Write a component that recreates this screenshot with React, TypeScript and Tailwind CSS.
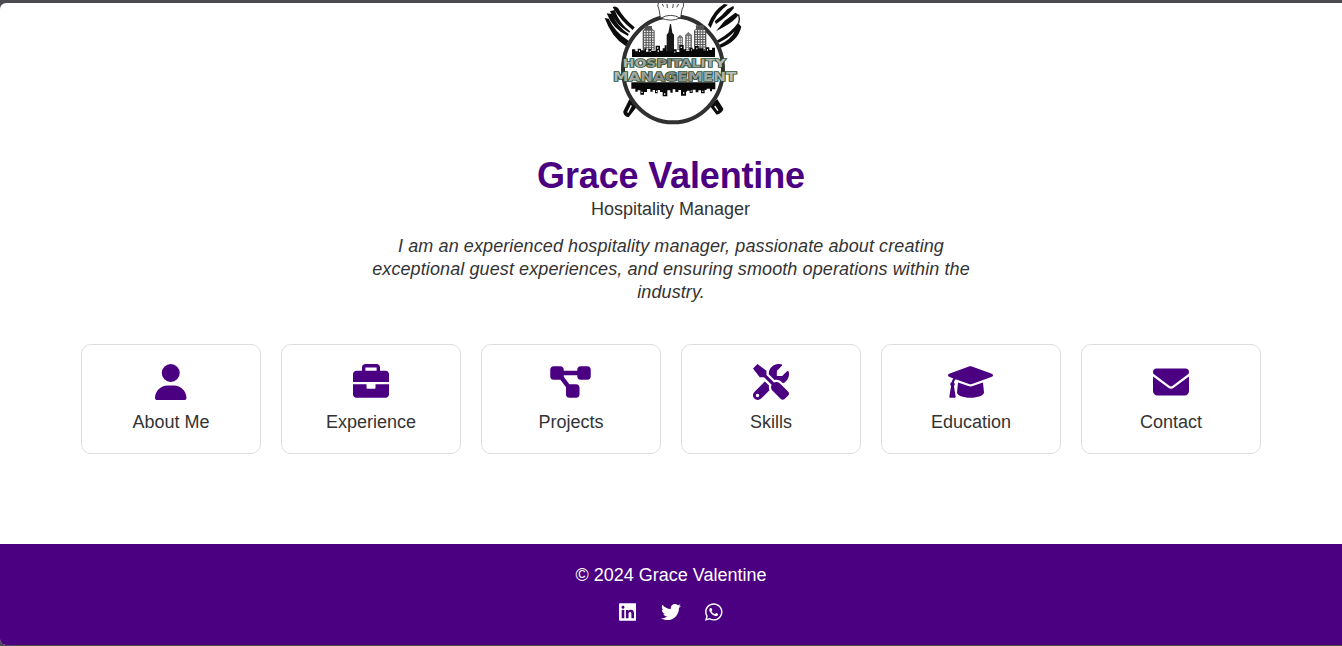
import React from "react";
import type { ComponentType } from "react";
import { FaUser, FaDiagramProject, FaEnvelope, FaLinkedin, FaTwitter, FaWhatsapp } from "react-icons/fa6";

type IconProps = { className?: string };

function BriefcaseIcon({ className }: IconProps) {
  return (
    <svg className={className} viewBox="0 0 512 512" fill="currentColor">
      <path d="M320 336c0 8.844-7.156 16-16 16h-96C199.2 352 192 344.8 192 336V288H0v144C0 457.6 22.41 480 48 480h416c25.59 0 48-22.41 48-48V288h-192V336zM464 96H384V48C384 22.41 361.6 0 336 0h-160C150.4 0 128 22.41 128 48V96H48C22.41 96 0 118.4 0 144V256h512V144C512 118.4 489.6 96 464 96zM336 96h-160V48h160V96z" />
    </svg>
  );
}

function ToolsIcon({ className }: IconProps) {
  return (
    <svg className={className} viewBox="0 0 512 512" fill="currentColor">
      <path d="M331.8 224.1c28.29 0 54.88 10.99 74.86 30.97l19.59 19.59c40.01-17.74 71.25-53.3 81.62-96.65c5.725-23.92 5.34-47.08 .2148-68.4c-2.613-10.88-16.43-14.51-24.34-6.604l-68.9 68.9h-75.6V97.2l68.9-68.9c7.912-7.912 4.275-21.73-6.604-24.34c-21.32-5.125-44.48-5.51-68.4 .2148c-55.3 13.23-98.39 60.22-107.2 116.4C224.5 128.9 224.2 137 224.3 145l82.78 82.86C315.2 225.1 323.5 224.1 331.8 224.1zM384 278.6c-23.16-23.16-57.57-27.57-85.39-13.9L191.1 158L191.1 95.99l-127.1-95.99L0 63.1l96 127.1l62.04 .0077l106.7 106.6c-13.67 27.82-9.251 62.23 13.91 85.39l117 117.1c14.62 14.5 38.21 14.5 52.71-.0016l52.75-52.75c14.5-14.5 14.5-38.08-.0016-52.71L384 278.6zM227.9 307L168.7 247.9l-148.9 148.9c-26.37 26.37-26.37 69.08 0 95.45C32.96 505.4 50.21 512 67.5 512s34.54-6.592 47.72-19.78l119.1-119.1C225.5 352.3 222.6 329.4 227.9 307zM64 472c-13.25 0-24-10.75-24-24c0-13.26 10.75-24 24-24S88 434.7 88 448C88 461.3 77.25 472 64 472z" />
    </svg>
  );
}

function GraduationIcon({ className }: IconProps) {
  return (
    <svg className={className} viewBox="0 0 640 512" fill="currentColor">
      <path d="M623.1 136.9l-282.7-101.2c-13.73-4.91-28.7-4.91-42.43 0L16.05 136.9C6.438 140.4 0 149.6 0 160s6.438 19.65 16.05 23.09L76.07 204.6c-11.89 15.8-20.26 34.16-24.55 53.95C40.05 263.4 32 274.8 32 288c0 9.953 4.814 18.49 11.94 24.36l-24.83 149C17.48 471.1 25 480 34.89 480H93.11c9.887 0 17.41-8.879 15.78-18.63l-24.83-149C91.19 306.5 96 297.1 96 288c0-10.29-5.174-19.03-12.72-24.89c4.252-17.76 12.88-33.82 24.94-47.03l190.6 68.23c13.73 4.91 28.7 4.91 42.43 0l282.7-101.2C633.6 179.6 640 170.4 640 160S633.6 140.4 623.1 136.9zM351.1 314.4C341.7 318.1 330.9 320 320 320c-10.92 0-21.69-1.867-32-5.555L142.8 262.5L128 405.3C128 446.6 213.1 480 320 480c105.1 0 192-33.4 192-74.67l-14.78-142.9L351.1 314.4z" />
    </svg>
  );
}

const sections: { label: string; Icon: ComponentType<IconProps>; size: string }[] = [
  { label: "About Me", Icon: FaUser, size: "w-[31.5px]" },
  { label: "Experience", Icon: BriefcaseIcon, size: "w-9" },
  { label: "Projects", Icon: FaDiagramProject, size: "w-[41px] mr-[2px]" },
  { label: "Skills", Icon: ToolsIcon, size: "w-9" },
  { label: "Education", Icon: GraduationIcon, size: "w-[45px] mr-[2px]" },
  { label: "Contact", Icon: FaEnvelope, size: "w-9" },
];

function Windows({ x, y, cols, rows, dx, dy }: { x: number; y: number; cols: number; rows: number; dx: number; dy: number }) {
  return (
    <g fill="#f4f4f4">
      {Array.from({ length: cols * rows }, (_, i) => (
        <rect key={i} x={x + (i % cols) * dx} y={y + Math.floor(i / cols) * dy} width={dx * 0.6} height={dy * 0.6} />
      ))}
    </g>
  );
}

function Logo() {
  return (
    <svg className="block h-[127px] w-[160px]" viewBox="0 9 480 381" role="img" aria-label="Hospitality Management">
      {/* left utensil */}
      <path d="M72 20 Q60 24 62 36 L48 42 Q42 52 46 64 Q66 116 108 138 L134 84 Q106 42 82 20Z" fill="#fff" />
      <g fill="#0c0c0c">
        <path d="M44 54 L56 56 Q76 98 116 122 L108 139 Q66 114 44 54Z" />
        <path d="M50 40 L66 42 Q82 80 116 102 L114 108 Q68 88 50 40Z" />
        <path d="M60 34 L74 30 Q88 70 120 94 L118 98 Q78 76 60 34Z" />
        <path d="M68 22 Q76 16 84 24 Q100 54 134 82 L128 90 Q92 62 68 22Z" />
      </g>
      {/* right utensil */}
      <g fill="#0c0c0c">
        <path d="M354 74 Q370 32 402 12 L414 14 Q378 38 362 84Z" />
        <path d="M374 64 Q398 46 412 28 L430 18 L432 24 Q414 48 378 72Z" />
        <path d="M404 62 Q426 46 436 38 L446 44 Q434 62 400 82 L378 94Z" />
        <path d="M380 122 Q426 96 444 68 L454 80 Q444 124 392 143 L386 136 Q424 118 434 94 Q414 116 386 128Z" />
      </g>
      <path d="M446 44 Q450 58 446 70" fill="none" stroke="#0c0c0c" strokeWidth="4" />
      {/* handles */}
      <path d="M118 298 L100 334 Q98 348 116 352 L142 318Z M382 298 L400 326 Q398 338 380 344 L358 316Z" fill="#0c0c0c" />
      <path d="M124 316 L113 338M374 318 L384 332" stroke="#fff" strokeWidth="4" />

      <ellipse cx="249" cy="208" rx="150" ry="159" fill="#fff" stroke="#303030" strokeWidth="12" />

      {/* chef's hat */}
      <path d="M211 53 L207 28 Q200 18 206 6 L280 6 Q283 20 276 28 L272 53 Q242 68 211 53Z" fill="#fff" stroke="#222" strokeWidth="2.5" />
      <path d="M213 54 Q242 38 270 54M221 20 L217 12M232 24 L231 12M248 24 L250 12M260 22 L266 12" fill="none" stroke="#222" strokeWidth="2.5" />

      {/* skyline */}
      <g fill="#555">
        <path d="M158 150V92L164 86V78H186V86L194 92V150Z" />
        <path d="M230 158V104L235 98L240 72H243L247 98L252 104V158Z" fill="#181818" />
        <path d="M262 150V112L270 104L279 112V150Z M285 150V106L295 96L306 106V150Z" fill="#777" />
        <path d="M312 150V92L318 86V76H342V86L349 92V150Z" />
      </g>
      <Windows x={162} y={92} cols={4} rows={8} dx={8} dy={7.5} />
      <Windows x={316} y={90} cols={4} rows={8} dx={8} dy={7.5} />
      <Windows x={266} y={115} cols={2} rows={5} dx={6} dy={7} />
      <Windows x={290} y={109} cols={2} rows={6} dx={7} dy={7} />
      <path
        d="M126 171V148H136V154H143V146H153V151H163V145H168V155H175V147H184V152H197V137H210V152H218V145H224V136H230V154H249V148H260V156H268V135H281V148H288V152H298V143H308V148H315V138H326V145H340V151H348V142H358V150H366V143H375V171Z"
        fill="#080808"
      />
      <path d="M147 151h3v5h-3zM179 152h3v4h-3zM201 142h4v4h-4zM203 151h4v4h-4zM272 140h4v4h-4zM319 143h3v5h-3zM351 147h3v5h-3zM303 148h2v4h-2zM253 154h3v4h-3z" fill="#fff" />
      <path
        d="M124 247H376V268H366V274H360V266H350V270H344V280H333V271H325V277H317V269H308V279H299V272H291V275H288V287H273V270H265V276H256V268H248V278H241V271H232V289H218V276H210V270H203V280H195V270H188V275H181V267H171V276H162V284H151V271H143V275H136V266H124Z"
        fill="#080808"
      />
      <path d="M154 275h4v4h-4zM198 272h3v4h-3zM222 280h4v4h-4zM279 277h4v4h-4zM302 271h3v4h-3zM337 272h3v4h-3z" fill="#fff" />

      {/* name lettering */}
      <defs>
        <linearGradient id="steel" x1="0" x2="1" y1="0" y2="0">
          <stop offset="0" stopColor="#b4bab4" />
          <stop offset=".45" stopColor="#858585" />
          <stop offset="1" stopColor="#bcc2bc" />
        </linearGradient>
      </defs>
      <g opacity="0.99" fill="url(#steel)" stroke="#294f2b" strokeWidth="5" paintOrder="stroke" fontFamily="DejaVu Sans, sans-serif" fontWeight="700">
        <text x="98" y="202" fontSize="33" textLength="308" lengthAdjust="spacingAndGlyphs">HOSPITALITY</text>
        <text x="70" y="242" fontSize="38" textLength="369" lengthAdjust="spacingAndGlyphs">MANAGEMENT</text>
      </g>
    </svg>
  );
}

export default function App() {
  return (
    <div className="h-[646px] bg-[#4c4b51] pt-[3px] pb-px font-['Liberation_Sans',Arial,sans-serif] text-lg text-[#333]">
      <div className="flex h-full flex-col overflow-hidden rounded-l-[6px] bg-white">
        <main className="flex flex-1 flex-col items-center">
          <div className="flex w-full justify-center pr-[2px]">
            <Logo />
          </div>
          <h1 className="mt-[25px] text-4xl leading-[41px] font-bold tracking-[-0.15px] text-[#4b0082]">Grace Valentine</h1>
          <p className="mt-[2px] pr-px leading-[23px]">Hospitality Manager</p>
          <p className="mt-[14px] w-[600px] text-center leading-[23px] tracking-[0.1px] italic">
            I am an experienced hospitality manager, passionate about creating exceptional guest experiences, and
            ensuring smooth operations within the industry.
          </p>
          <nav className="mt-10 grid grid-cols-6 gap-5">
            {sections.map(({ label, Icon, size }) => (
              <a
                key={label}
                href="#"
                className="flex h-[110px] w-[180px] flex-col items-center rounded-[10px] border border-[#ddd] pt-[19.4px]"
              >
                <Icon className={`h-9 text-[#4b0082] ${size}`} />
                <span className="mt-[10.6px] leading-[23px]">{label}</span>
              </a>
            ))}
          </nav>
        </main>
        <footer className="flex h-[101px] flex-col items-center bg-[#4b0082] pt-5 text-white">
          <p className="leading-[23px]">© 2024 Grace Valentine</p>
          <div className="mt-[15.4px] flex gap-6">
            <FaLinkedin className="mr-px -ml-px h-5 w-[17.5px]" />
            <FaTwitter className="h-5 w-5" />
            <FaWhatsapp className="h-5 w-[17.5px]" />
          </div>
        </footer>
      </div>
    </div>
  );
}
